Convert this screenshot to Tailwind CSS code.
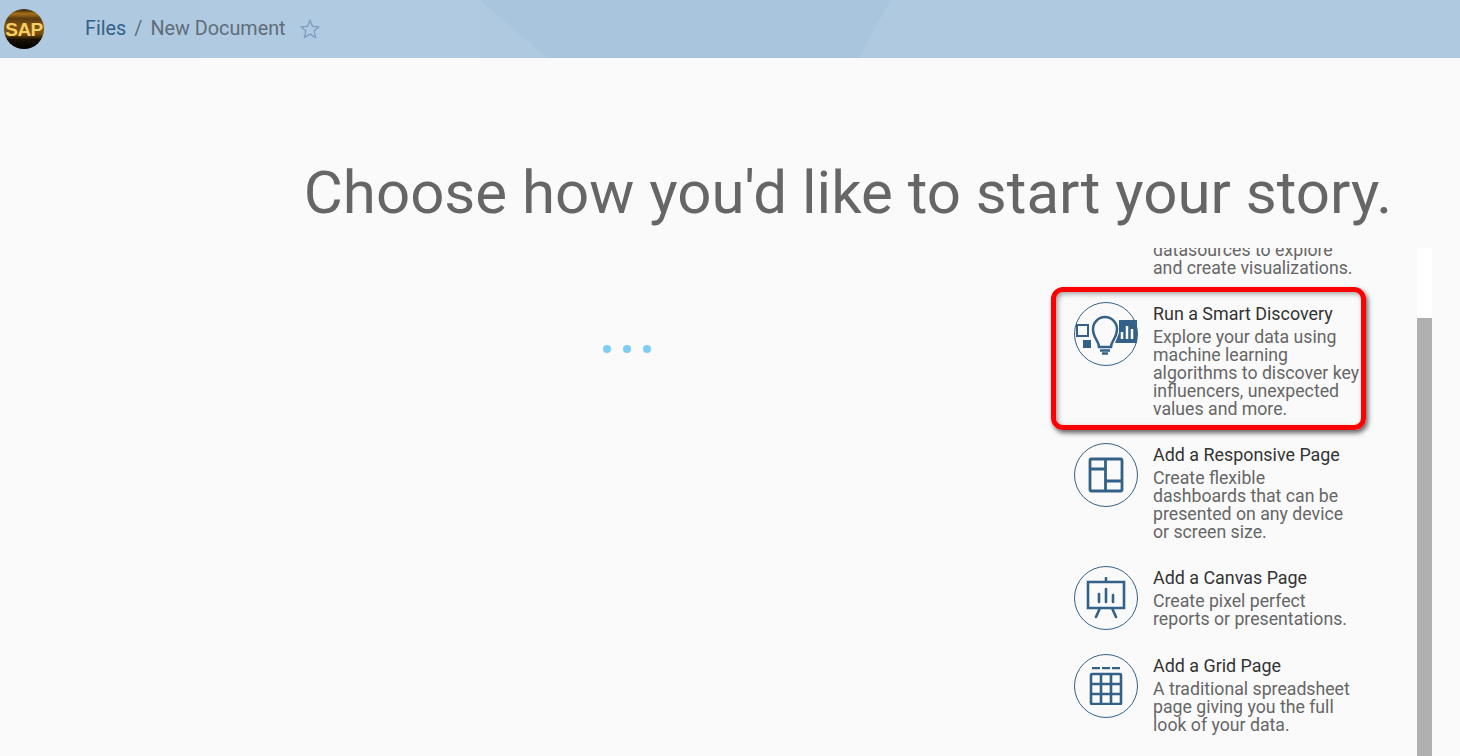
<!DOCTYPE html>
<html lang="en">
<head>
    <meta charset="UTF-8">
    <title>New Document</title>
    <script src="https://cdn.jsdelivr.net/npm/@tailwindcss/browser@4"></script>
</head>
<body class="bg-[#fafafa] font-['Roboto',sans-serif] overflow-hidden">
    <div class="w-[1460px] h-[756px] flex flex-col overflow-hidden">
        <!-- shell bar -->
        <header class="relative h-[58px] shrink-0 bg-[#afc9e0] flex items-center">
            <svg class="absolute inset-0" width="1460" height="58">
                <polygon points="480,0 891,0 858,58 547,58" fill="#a9c5dd"/>
                <rect x="200" y="0" width="280" height="58" fill="#b1cbe1" opacity="0.5"/>
            </svg>
            <div class="relative ml-1 w-10 h-10 rounded-full overflow-hidden bg-[linear-gradient(#2a1c08_0%,#a8701a_12%,#5a3a10_24%,#7a5012_40%,#7a5012_62%,#1a1006_76%,#000_100%)] flex items-center justify-center">
                <span class="text-[19px] leading-none font-bold text-[#f5cf62] tracking-[-0.5px] font-['Liberation_Sans',sans-serif]">SAP</span>
            </div>
            <nav class="relative ml-[41px] -mt-[1px] flex items-center text-[19.800px] text-[#5f6d78]">
                <a class="text-[#346187]">Files</a>
                <span class="mx-[8px]">/</span>
                <span>New Document</span>
                <svg class="ml-[14px]" width="20" height="20" viewBox="0 0 20 20" fill="none" stroke="#7a9dbd" stroke-width="1.300" stroke-linejoin="round">
                    <path d="M10 1.200l2.500 6.100 6.600.5-5 4.300 1.600 6.500L10 15.100l-5.700 3.500 1.600-6.500-5-4.300 6.600-.5z"/>
                </svg>
            </nav>
        </header>

        <main class="relative flex-1 min-h-0 flex flex-col">
            <h1 class="mt-[95px] h-[95px] pr-[68px] text-right text-[60px] leading-[80px] text-[#666666] whitespace-nowrap">Choose how you'd like to start your story.</h1>

            <div class="flex-1 min-h-0 flex">
                <!-- busy indicator -->
                <div class="w-[1054px] pt-[97px] pl-[603px] flex gap-[12px] items-start">
                    <span class="w-2 h-2 rounded-full bg-[#7fcdf2]"></span>
                    <span class="w-2 h-2 rounded-full bg-[#7fcdf2]"></span>
                    <span class="w-2 h-2 rounded-full bg-[#7fcdf2]"></span>
                </div>

                <!-- start options list -->
                <div class="w-[363px] overflow-hidden">
                    <div class="-mt-[7px] pl-[99px] text-[17.700px] leading-[18px] text-[#666666]">
                        <p>datasources to explore</p>
                        <p>and create visualizations.</p>
                    </div>

                    <div class="mt-[24px] ml-[20px] flex gap-[15px] h-[142px]">
                        <div class="w-16 h-16 mt-[1px] shrink-0 rounded-full border border-[#346187] flex items-center justify-center">
                            <svg width="62" height="62" viewBox="0 0 62 62" fill="none" stroke="#346187">
                                <rect x="2" y="22" width="11" height="11" stroke-width="2"/>
                                <rect x="8" y="37" width="8" height="8" fill="#346187" stroke="none"/>
                                <path d="M40 40H62V17H44V30z" fill="#346187" stroke="none"/>
                                <path d="M47 36v-7M52 36V23M57 36V26" stroke="#fff" stroke-width="2.500"/>
                                <path d="M24 44c0-6-6-9-6-18a12 12 0 0 1 24 0c0 9-6 12-6 18z" fill="#fafafa" stroke-width="2.500"/>
                                <path d="M25 47.500h10M27 50.500h6" stroke-width="2.500"/>
                            </svg>
                        </div>
                        <div class="whitespace-nowrap">
                            <h3 class="mt-[2px] mb-[3px] text-[17.900px] leading-[22px] text-[#333333]">Run a Smart Discovery</h3>
                            <p class="text-[17.700px] leading-[18px] text-[#666666]">Explore your data using<br>machine learning<br>algorithms to discover key<br>influencers, unexpected<br>values and more.</p>
                        </div>
                    </div>

                    <div class="ml-[20px] flex gap-[15px] h-[123px]">
                        <div class="w-16 h-16 shrink-0 rounded-full border border-[#346187] flex items-center justify-center">
                            <svg width="36" height="36" viewBox="0 0 36 36" fill="none" stroke="#346187" stroke-width="2.800" stroke-linejoin="round">
                                <rect x="2" y="2" width="32" height="32" rx="1.500"/>
                                <path d="M17.500 2v32M2 12h15.500M17.500 24H34"/>
                            </svg>
                        </div>
                        <div class="whitespace-nowrap">
                            <h3 class="mt-[1px] mb-[3px] text-[17.900px] leading-[22px] text-[#333333]">Add a Responsive Page</h3>
                            <p class="text-[17.700px] leading-[18px] text-[#666666]">Create flexible<br>dashboards that can be<br>presented on any device<br>or screen size.</p>
                        </div>
                    </div>

                    <div class="ml-[20px] flex gap-[15px] h-[88px]">
                        <div class="w-16 h-16 shrink-0 rounded-full border border-[#346187] flex items-center justify-center">
                            <svg width="40" height="42" viewBox="0 0 40 42" fill="none" stroke="#346187" stroke-width="2.600" stroke-linecap="round">
                                <path d="M20 1v4M2 5h36v26H2zM14 31l-4 9M26 31l4 9"/>
                                <path d="M13 25v-8M20 25V12M27 25v-7"/>
                            </svg>
                        </div>
                        <div class="whitespace-nowrap">
                            <h3 class="mt-[1px] mb-[3px] text-[17.900px] leading-[22px] text-[#333333]">Add a Canvas Page</h3>
                            <p class="text-[17.700px] leading-[18px] text-[#666666]">Create pixel perfect<br>reports or presentations.</p>
                        </div>
                    </div>

                    <div class="ml-[20px] flex gap-[15px]">
                        <div class="w-16 h-16 shrink-0 rounded-full border border-[#346187] flex items-center justify-center">
                            <svg width="34" height="38" viewBox="0 0 34 38" fill="none" stroke="#346187" stroke-width="2.600" stroke-linejoin="round">
                                <path d="M3 1h8M13 1h8M23 1h8"/>
                                <rect x="2" y="7" width="30" height="30" rx="1"/>
                                <path d="M12 7v30M22 7v30M2 17h30M2 27h30"/>
                            </svg>
                        </div>
                        <div class="whitespace-nowrap">
                            <h3 class="mt-[1px] mb-[3px] text-[17.900px] leading-[22px] text-[#333333]">Add a Grid Page</h3>
                            <p class="text-[17.700px] leading-[18px] text-[#666666]">A traditional spreadsheet<br>page giving you the full<br>look of your data.</p>
                        </div>
                    </div>
                </div>

                <!-- scrollbar -->
                <div class="w-[15px] flex flex-col">
                    <div class="h-[70px] bg-white"></div>
                    <div class="flex-1 bg-[#b0b0b0]"></div>
                </div>
            </div>

            <!-- annotation over the list -->
            <div class="absolute left-[1051px] top-[229px] w-[315px] h-[143px] rounded-[12px] border-[5px] border-[#ff0000] shadow-[2px_3px_5px_rgba(0,0,0,0.6),inset_2px_2px_5px_rgba(0,0,0,0.35)]"></div>
        </main>
    </div>
</body>
</html>
